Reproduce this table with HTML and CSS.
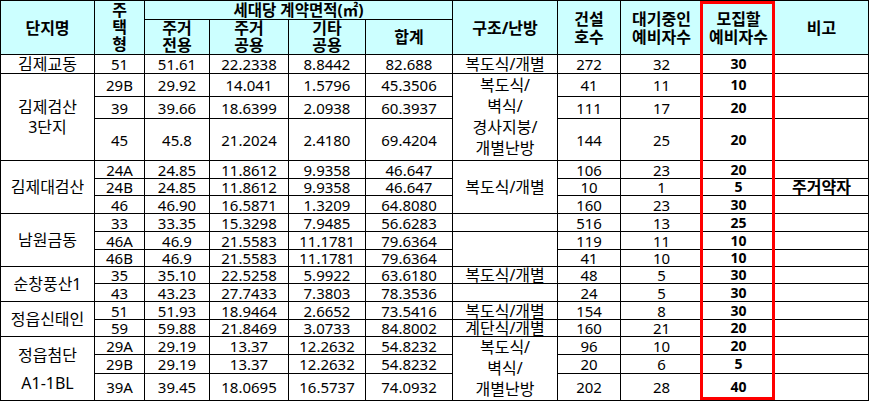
FILE: index.html
```html
<!DOCTYPE html>
<html lang="ko">
<head>
<meta charset="utf-8">
<title>모집 현황</title>
<link rel="stylesheet" href="styles.css">
</head>
<body>
<div class="sheet">
<table class="grid">
  <colgroup>
    <col class="c1"><col class="c2"><col class="c3"><col class="c4"><col class="c5"><col class="c6">
    <col class="c7"><col class="c8"><col class="c9"><col class="c10"><col class="c11">
  </colgroup>
  <thead>
    <tr class="h19">
      <th rowspan="2">단지명</th>
      <th rowspan="2" class="stack17">주<br>택<br>형</th>
      <th colspan="4" class="title">세대당 계약면적(㎡)</th>
      <th rowspan="2">구조/난방</th>
      <th rowspan="2" class="stack18">건설<br>호수</th>
      <th rowspan="2" class="stack18">대기중인<br>예비자수</th>
      <th rowspan="2" class="stack18">모집할<br>예비자수</th>
      <th rowspan="2">비고</th>
    </tr>
    <tr class="h34">
      <th class="stack17">주거<br>전용</th>
      <th class="stack17">주거<br>공용</th>
      <th class="stack17">기타<br>공용</th>
      <th>합계</th>
    </tr>
  </thead>
  <tbody>
    <tr class="h19">
      <td class="ko">김제교동</td><td>51</td><td>51.61</td><td>22.2338</td><td>8.8442</td><td>82.688</td>
      <td class="ko">복도식/개별</td><td>272</td><td>32</td><td class="pick">30</td><td></td>
    </tr>
    <tr class="h23">
      <td rowspan="3" class="ko stack20">김제검산<br>3단지</td><td>29B</td><td>29.92</td><td>14.041</td><td>1.5796</td><td>45.3506</td>
      <td rowspan="3" class="ko stack21">복도식/<br>벽식/<br>경사지붕/<br>개별난방</td><td>41</td><td>11</td><td class="pick">10</td><td></td>
    </tr>
    <tr class="h22">
      <td>39</td><td>39.66</td><td>18.6399</td><td>2.0938</td><td>60.3937</td>
      <td>111</td><td>17</td><td class="pick">20</td><td></td>
    </tr>
    <tr class="h42">
      <td>45</td><td>45.8</td><td>21.2024</td><td>2.4180</td><td>69.4204</td>
      <td>144</td><td>25</td><td class="pick">20</td><td></td>
    </tr>
    <tr class="h18">
      <td rowspan="3" class="ko">김제대검산</td><td>24A</td><td>24.85</td><td>11.8612</td><td>9.9358</td><td>46.647</td>
      <td rowspan="3" class="ko">복도식/개별</td><td>106</td><td>23</td><td class="pick">20</td><td></td>
    </tr>
    <tr class="h17">
      <td>24B</td><td>24.85</td><td>11.8612</td><td>9.9358</td><td>46.647</td>
      <td>10</td><td>1</td><td class="pick">5</td><td class="ko note">주거약자</td>
    </tr>
    <tr class="h18">
      <td>46</td><td>46.90</td><td>16.5871</td><td>1.3209</td><td>64.8080</td>
      <td>160</td><td>23</td><td class="pick">30</td><td></td>
    </tr>
    <tr class="h18">
      <td rowspan="3" class="ko">남원금동</td><td>33</td><td>33.35</td><td>15.3298</td><td>7.9485</td><td>56.6283</td>
      <td></td><td>516</td><td>13</td><td class="pick">25</td><td></td>
    </tr>
    <tr class="h18">
      <td>46A</td><td>46.9</td><td>21.5583</td><td>11.1781</td><td>79.6364</td>
      <td rowspan="2"></td><td>119</td><td>11</td><td class="pick">10</td><td></td>
    </tr>
    <tr class="h17">
      <td>46B</td><td>46.9</td><td>21.5583</td><td>11.1781</td><td>79.6364</td>
      <td>41</td><td>10</td><td class="pick">10</td><td></td>
    </tr>
    <tr class="h17">
      <td rowspan="2" class="ko">순창풍산1</td><td>35</td><td>35.10</td><td>22.5258</td><td>5.9922</td><td>63.6180</td>
      <td class="ko">복도식/개별</td><td>48</td><td>5</td><td class="pick">30</td><td></td>
    </tr>
    <tr class="h18">
      <td>43</td><td>43.23</td><td>27.7433</td><td>7.3803</td><td>78.3536</td>
      <td></td><td>24</td><td>5</td><td class="pick">30</td><td></td>
    </tr>
    <tr class="h18">
      <td rowspan="2" class="ko">정읍신태인</td><td>51</td><td>51.93</td><td>18.9464</td><td>2.6652</td><td>73.5416</td>
      <td class="ko">복도식/개별</td><td>154</td><td>8</td><td class="pick">30</td><td></td>
    </tr>
    <tr class="h17">
      <td>59</td><td>59.88</td><td>21.8469</td><td>3.0733</td><td>84.8002</td>
      <td class="ko">계단식/개별</td><td>160</td><td>21</td><td class="pick">20</td><td></td>
    </tr>
    <tr class="h18">
      <td rowspan="3" class="ko stack28">정읍첨단<br>A1-1BL</td><td>29A</td><td>29.19</td><td>13.37</td><td>12.2632</td><td>54.8232</td>
      <td rowspan="3" class="ko stack21">복도식/<br>벽식/<br>개별난방</td><td>96</td><td>10</td><td class="pick">20</td><td></td>
    </tr>
    <tr class="h18">
      <td>29B</td><td>29.19</td><td>13.37</td><td>12.2632</td><td>54.8232</td>
      <td>20</td><td>6</td><td class="pick">5</td><td></td>
    </tr>
    <tr class="h27">
      <td>39A</td><td>39.45</td><td>18.0695</td><td>16.5737</td><td>74.0932</td>
      <td>202</td><td>28</td><td class="pick">40</td><td></td>
    </tr>
  </tbody>
</table>
<div class="highlight"></div>
</div>
</body>
</html>
```

FILE: styles.css
```css
html, body {
  margin: 0;
  padding: 0;
  background: #ffffff;
}

.sheet {
  position: relative;
  width: 870px;
  height: 401px;
  font-family: "Noto Sans", "Noto Sans CJK KR", sans-serif;
  color: #000000;
}

.grid {
  border-collapse: separate;
  border-spacing: 0;
  table-layout: fixed;
  width: 869px;
  border-left: 1px solid #000000;
  border-top: 1px solid #000000;
}

.c1 { width: 94px; }
.c2 { width: 50px; }
.c3 { width: 65px; }
.c4 { width: 79px; }
.c5 { width: 77px; }
.c6 { width: 87px; }
.c7 { width: 105px; }
.c8 { width: 63px; }
.c9 { width: 82px; }
.c10 { width: 72px; }
.c11 { width: 94px; }

.grid th,
.grid td {
  padding: 0;
  border-right: 1px solid #000000;
  border-bottom: 1px solid #000000;
  text-align: center;
  vertical-align: middle;
  white-space: nowrap;
  overflow: visible;
  font-size: 15px;
  line-height: 16px;
}

.grid th {
  background: #ccffff;
  font-weight: 700;
  font-size: 16px;
}

.grid th.title {
  font-size: 15.5px;
}

.grid td {
  font-weight: 400;
}

.grid td.ko {
  font-size: 16px;
}

.grid td.note {
  font-weight: 700;
}

.h17 { height: 17px; }
.h18 { height: 18px; }
.h19 { height: 19px; }
.h22 { height: 22px; }
.h23 { height: 23px; }
.h27 { height: 27px; }
.h34 { height: 34px; }
.h42 { height: 42px; }

.grid .stack17 { line-height: 17px; }
.grid .stack18 { line-height: 18px; }
.grid .stack20 { line-height: 20px; }
.grid .stack21 { line-height: 21px; }
.grid .stack28 { line-height: 28px; }

.grid td.pick {
  font-weight: 700;
  font-size: 14px;
}

.highlight {
  position: absolute;
  left: 700px;
  top: 1px;
  width: 75px;
  height: 399px;
  box-sizing: border-box;
  border: 3px solid #ff0000;
  pointer-events: none;
}
```
